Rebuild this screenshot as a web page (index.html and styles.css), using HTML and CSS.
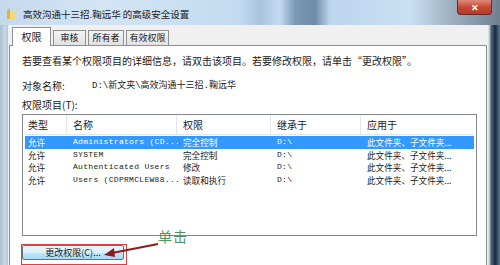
FILE: index.html
```html
<!DOCTYPE html>
<html lang="zh-CN">
<head>
  <meta charset="UTF-8">
  <title>高级安全设置</title>
  <link rel="stylesheet" href="styles.css">
</head>
<body>
  <div class="window">
    <div class="titlebar">
      <svg class="folder" width="10" height="13" viewBox="0 0 10 13">
        <path d="M1 3 L4 1 L4 12 L1 12 Z" fill="#e2b545"/>
        <path d="M4 4 L9 5 L9 12 L4 12 Z" fill="#f3d97a"/>
      </svg>
      <span class="title">高效沟通十三招.鞠远华 的高级安全设置</span>
      <div class="close">&#x2715;</div>
    </div>
    <div class="frame">
      <div class="edge-left"></div>
      <div class="content">
        <div class="tabs">
          <div class="tab active">权限</div>
          <div class="tab w33">审核</div>
          <div class="tab w36">所有者</div>
          <div class="tab w43">有效权限</div>
        </div>
        <div class="panel">
          <p class="line first">若要查看某个权限项目的详细信息，请双击该项目。若要修改权限，请单击“更改权限”。</p>
          <p class="line object"><span class="label">对象名称:</span><span class="path">D:\新文夹\高效沟通十三招.鞠远华</span></p>
          <p class="line items">权限项目(<u>T</u>):</p>
          <div class="listbox">
            <div class="row head">
              <span>类型</span><span>名称</span><span>权限</span><span>继承于</span><span>应用于</span>
            </div>
            <div class="row selected">
              <span>允许</span><span class="mono">Administrators (CD...</span><span>完全控制</span><span class="mono">D:\</span><span>此文件夹、子文件夹...</span>
            </div>
            <div class="row">
              <span>允许</span><span class="mono">SYSTEM</span><span>完全控制</span><span class="mono">D:\</span><span>此文件夹、子文件夹...</span>
            </div>
            <div class="row">
              <span>允许</span><span class="mono">Authenticated Users</span><span>修改</span><span class="mono">D:\</span><span>此文件夹、子文件夹...</span>
            </div>
            <div class="row">
              <span>允许</span><span class="mono">Users (CDPRMCLEW88...</span><span>读取和执行</span><span class="mono">D:\</span><span>此文件夹、子文件夹...</span>
            </div>
          </div>
          <div class="mark">
            <button class="change">更改权限(C)...</button>
          </div>
        </div>
      </div>
      <div class="edge-right"></div>
    </div>
  </div>

  <!-- annotation over the screenshot -->
  <div class="note">单击</div>
  <svg class="arrow" width="60" height="20" viewBox="0 0 60 20">
    <path d="M56 2 L10 11" stroke="#8a1c1c" stroke-width="2" fill="none"/>
    <path d="M2 13 L12 6 L13 15 Z" fill="#8a1c1c"/>
  </svg>
</body>
</html>
```

FILE: styles.css
```css
body {
  margin: 0;
  width: 500px;
  height: 265px;
  overflow: hidden;
  font-family: "Noto Sans CJK SC", "Liberation Sans", sans-serif;
  font-size: 10px;
  color: #1a1a1a;
  position: relative;
}
.window {
  display: flex;
  flex-direction: column;
  height: 265px;
}
.titlebar {
  height: 25px;
  display: flex;
  align-items: center;
  background: linear-gradient(90deg, #c5d9ec 0%, #d3e5f5 20%, #c2daf0 48%, #a8c4de 52%, #c4dcf2 56%, #7d99b4 59%, #6d8aa6 63%, #bcd6ee 66%, #c9dff3 82%, #9fb2c3 90%, #6f8090 100%);
  flex-shrink: 0;
}
.folder {
  margin-left: 6px;
  margin-top: 2px;
}
.title {
  margin-left: 7px;
  margin-top: 3px;
  font-size: 9.5px;
  color: #1c1c1c;
}
.close {
  margin-left: auto;
  margin-right: 8px;
  align-self: flex-start;
  width: 35px;
  height: 15px;
  box-sizing: border-box;
  border: 1px solid #6e2a22;
  border-top: none;
  border-radius: 0 0 4px 4px;
  background: linear-gradient(#e08a7a, #c64a38 50%, #b23a28);
  color: #fff;
  font-size: 9px;
  font-weight: bold;
  display: flex;
  align-items: center;
  justify-content: center;
}
.frame {
  display: flex;
  flex: 1;
}
.edge-left {
  width: 8px;
  background: linear-gradient(90deg, #aebfd0, #c6d8ea 60%, #b5c7d8);
}
.edge-right {
  width: 12px;
  background: linear-gradient(90deg, #d9dfe5 0 1px, #4d6a86 3px, #1c2a38 60%, #5a7896);
}
.content {
  flex: 1;
  background: #f0f0f0;
  padding-top: 2px;
  display: flex;
  flex-direction: column;
}
.tabs {
  display: flex;
  align-items: flex-end;
  gap: 2px;
  padding-left: 4px;
  height: 18px;
  position: relative;
  z-index: 1;
}
.tab {
  height: 15px;
  line-height: 14px;
  border: 1px solid #8e8f8f;
  border-bottom: none;
  background: linear-gradient(#f4f4f4, #e1e1e1);
  box-sizing: border-box;
  font-size: 9px;
  text-align: center;
}
.tab.w33 { width: 33px; }
.tab.w36 { width: 36px; }
.tab.w43 { width: 43px; }
.tab.active {
  height: 19px;
  line-height: 17px;
  width: 39px;
  font-size: 10px;
  background: #fff;
  margin-bottom: -1px;
}
.panel {
  flex: 1;
  margin-left: 1px;
  margin-right: 1px;
  border: 1px solid #8e8f8f;
  border-bottom: none;
  background: #fff;
  padding-left: 12px;
}
.line {
  margin: 0;
  height: 14px;
  line-height: 14px;
}
.line.first {
  margin-top: 8px;
}
.line.object {
  margin-top: 11px;
  display: flex;
}
.label {
  width: 70px;
}
.path {
  font-family: "Liberation Mono", "Noto Sans CJK SC", monospace;
  font-size: 9px;
}
.line.items {
  margin-top: 5px;
}
.line.items u {
  text-decoration: none;
}
.listbox {
  margin-top: 2px;
  width: 455px;
  height: 122px;
  box-sizing: border-box;
  border: 1px solid #828790;
  padding: 0 2px;
}
.row {
  display: grid;
  grid-template-columns: 45px 110px 94px 90px 1fr;
  height: 12.5px;
  line-height: 12.5px;
  font-size: 8.6px;
  padding-left: 3px;
  white-space: nowrap;
}
.row span {
  overflow: hidden;
}
.row.head {
  height: 19px;
  line-height: 19px;
  font-size: 10px;
  margin-bottom: 1px;
  border-bottom: 1px solid #e5e5e5;
}
.row.head span {
  border-right: 1px solid #e5e5e5;
  margin-right: 6px;
}
.row.head span:last-child {
  border-right: none;
}
.row.selected {
  background: #3399ff;
  color: #fff;
}
.mono {
  font-family: "Liberation Mono", monospace;
  font-size: 8px;
  letter-spacing: 0.3px;
}
.mark {
  display: inline-block;
  margin-top: 8px;
  margin-left: -1px;
  border: 1px solid #d94040;
  padding: 0 2px 4px 0;
}
.change {
  display: block;
  width: 102px;
  height: 15px;
  margin: 0;
  padding: 0;
  border: 1px solid #707070;
  border-radius: 2px;
  background: linear-gradient(#eaf6fd, #d9f0fc 50%, #bee6fd 51%, #a7d9f5);
  font-family: "Noto Sans CJK SC", sans-serif;
  font-size: 9px;
  line-height: 13px;
  color: #1a1a1a;
  text-align: center;
}
.note {
  position: absolute;
  left: 158px;
  top: 226px;
  font-size: 14px;
  color: #4e9160;
  letter-spacing: 1px;
}
.arrow {
  position: absolute;
  left: 102px;
  top: 242px;
}
```
